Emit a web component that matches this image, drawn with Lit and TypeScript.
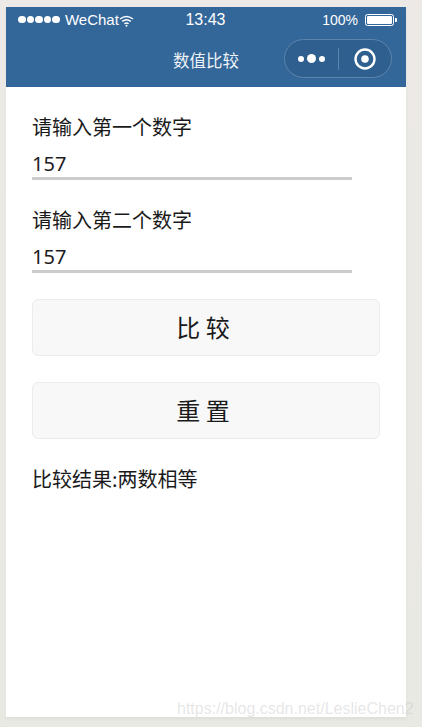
import { LitElement, html, css } from "lit";
import { customElement } from "lit/decorators.js";

@customElement("app-root")
export class AppRoot extends LitElement {
  static styles = css`
    :host { display: block; height: 727px; background: linear-gradient(#ece9e6, #e9e9e4); position: relative; overflow: hidden;
      font-family: "Noto Sans CJK SC", sans-serif; color: #1a1a1a; }
    .frame { margin: 7px 16px 0 6px; height: 710px; background: #fff; display: flex; flex-direction: column; box-shadow: 0 2px 3px rgba(0,0,0,.05); }
    .head { height: 80px; background: #336699; color: #fff; flex: none; display: flex; flex-direction: column; }
    .status { height: 25px; padding: 0 9px 0 12px; display: grid; grid-template-columns: 1fr auto 1fr; align-items: center; font-family: "Liberation Sans", sans-serif; font-size: 15px; }
    .left, .right { display: flex; align-items: center; }
    .right { justify-content: flex-end; gap: 7px; font-size: 14px; }
    .sig { display: flex; gap: 1px; margin-right: 5px; }
    .sig i { width: 7.6px; height: 7.6px; background: #fff; border-radius: 50%; }
    .time { font-size: 16px; margin-left: -4px; }
    .wifi { margin-top: 2px; }
    .nav { flex: 1; display: flex; align-items: center; padding: 0 14px 4px 0; position: relative; }
    .title { position: absolute; left: 0; right: 0; bottom: 16px; text-align: center; font-size: 16.5px; line-height: 22px; color: #eef3f8; }
    .capsule { margin-left: auto; width: 106px; height: 37px; border: 1px solid #5c85ad; border-radius: 20px; background: #2f5f8f; display: flex; align-items: center; position: relative; top: 1px; }
    .dots { width: 53px; padding-left: 13px; box-sizing: border-box; display: flex; align-items: center; gap: 3px; }
    .dots i { background: #fff; border-radius: 50%; width: 6px; height: 6px; }
    .dots i.big { width: 9px; height: 9px; }
    .sep { width: 1px; height: 22px; background: #5c85ad; }
    .rec { margin-left: 15px; width: 22px; height: 22px; }
    .body { padding: 27px 26px 0 26px; display: flex; flex-direction: column; }
    .label { font-size: 20px; line-height: 26px; height: 26px; }
    .value { font-family: "Noto Sans", sans-serif; font-size: 20px; line-height: 27px; height: 27px; margin-top: 10px; color: #1c1c22; }
    .line { width: 320px; height: 3px; background: #cccccc; }
    .field + .field { margin-top: 27px; }
    .btn { height: 52px; padding: 0 6px 3px 0; border: 1px solid #ececec; border-radius: 6px; background: #f8f8f8; display: flex; align-items: center; justify-content: center; font-size: 24px; color: #1a1a1a; white-space: pre; }
    .btn.a { margin-top: 26px; }
    .btn.b { margin-top: 26px; }
    .result { font-size: 20px; line-height: 26px; margin-top: 27px; }
    .mark { position: absolute; left: 177px; top: 699px; font-family: "Liberation Sans", sans-serif; font-size: 16px; line-height: 20px; color: rgba(200,200,200,.45); white-space: nowrap; }
  `;

  render() {
    return html`
      <div class="frame">
        <div class="head">
          <div class="status">
            <div class="left">
              <span class="sig"><i></i><i></i><i></i><i></i><i></i></span>
              <span>WeChat</span>
              <svg class="wifi" width="15" height="12" viewBox="0 0 15 12" fill="none" stroke="#fff" stroke-width="1.4">
                <path d="M1 4 Q7.5 -1 14 4" /><path d="M3.2 6.4 Q7.5 3 11.8 6.4" /><path d="M5.4 8.8 Q7.5 7 9.6 8.8" />
                <circle cx="7.5" cy="10.8" r="1" fill="#fff" stroke="none" />
              </svg>
            </div>
            <div class="time">13:43</div>
            <div class="right">
              <span>100%</span>
              <svg width="32" height="12" viewBox="0 0 32 12">
                <rect x=".5" y=".5" width="28" height="11" rx="2" fill="none" stroke="#fff" />
                <rect x="2" y="2" width="25" height="8" rx="1" fill="#fff" />
                <path d="M30 4 h1 a1 1 0 0 1 1 1 v2 a1 1 0 0 1 -1 1 h-1 z" fill="#fff" />
              </svg>
            </div>
          </div>
          <div class="nav">
            <div class="title">数值比较</div>
            <div class="capsule">
              <div class="dots"><i></i><i class="big"></i><i></i></div>
              <div class="sep"></div>
              <svg class="rec" viewBox="0 0 22 22">
                <circle cx="11" cy="11" r="9.5" fill="none" stroke="#fff" stroke-width="2.4" />
                <circle cx="11" cy="11" r="3.8" fill="#fff" />
              </svg>
            </div>
          </div>
        </div>
        <div class="body">
          <div class="field">
            <div class="label">请输入第一个数字</div>
            <div class="value">157</div>
            <div class="line"></div>
          </div>
          <div class="field">
            <div class="label">请输入第二个数字</div>
            <div class="value">157</div>
            <div class="line"></div>
          </div>
          <div class="btn a">比 较</div>
          <div class="btn b">重 置</div>
          <div class="result">比较结果:两数相等</div>
        </div>
      </div>
      <div class="mark">https://blog.csdn.net/LeslieChen2</div>
    `;
  }
}
